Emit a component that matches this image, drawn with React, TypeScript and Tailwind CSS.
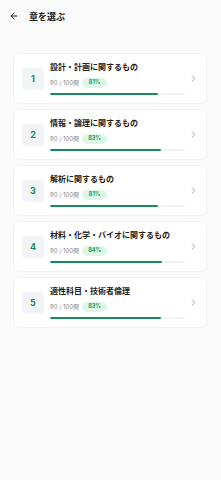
import { ArrowLeft, ChevronRight } from "lucide-react";

type Chapter = { no: number; title: string; done: number; total: number; rate: number };

const CHAPTERS: Chapter[] = [
  { no: 1, title: "設計・計画に関するもの",         done: 80, total: 100, rate: 81 },
  { no: 2, title: "情報・論理に関するもの",         done: 80, total: 100, rate: 83 },
  { no: 3, title: "解析に関するもの",               done: 80, total: 100, rate: 81 },
  { no: 4, title: "材料・化学・バイオに関するもの", done: 80, total: 100, rate: 84 },
  { no: 5, title: "適性科目・技術者倫理",           done: 80, total: 100, rate: 83 },
];

const FONT = { fontFamily: '"Inter", "Noto Sans CJK JP", sans-serif' };

export default function App() {
  return (
    <div className="min-h-screen bg-[#fafafa]" style={FONT}>
      {/* Header */}
      <div className="flex items-center h-[32px] pl-[9px] gap-[10px]">
        <ArrowLeft className="w-[10px] h-[10px] text-[#222]" strokeWidth={2.4} />
        <h1 className="text-[9px] font-bold text-[#222] leading-none">章を選ぶ</h1>
      </div>

      {/* Chapter list */}
      <div className="flex flex-col gap-[5px] pl-[13px] pr-[14px] pt-[21px]">
        {CHAPTERS.map((c) => (
          <div
            key={c.no}
            className="flex items-center h-[51px] bg-white border border-[#f0f0f0] rounded-[7px] pl-[8px] pr-[7px]"
          >
            <div className="flex items-center justify-center w-[22px] h-[22px] rounded-[4px] bg-[#f1f4f7] shrink-0">
              <span className="text-[9px] font-bold text-[#1b8a5e] leading-none">{c.no}</span>
            </div>
            <div className="flex flex-col ml-[6px] w-[135px] shrink-0">
              <p className="text-[8px] font-bold text-[#222] leading-[11px]">{c.title}</p>
              <div className="flex items-center gap-[3px] mt-[5px]">
                <span className="text-[6px] text-[#888] leading-none">
                  {c.done} / {c.total}問
                </span>
                <span className="flex items-center justify-center w-[25px] h-[10px] rounded-full bg-[#dcf7e7] text-[5.5px] font-bold text-[#1e9a60] leading-none">
                  {c.rate}%
                </span>
              </div>
              <div className="h-[2.5px] mt-[5px] rounded-full bg-[#f1f4f7] overflow-hidden">
                <div className="h-full bg-[#178a5c] rounded-full" style={{ width: `${c.rate - 1}%` }} />
              </div>
            </div>
            <div className="flex-1" />
            <ChevronRight className="w-[11px] h-[11px] text-[#9aa0a6]" strokeWidth={2} />
          </div>
        ))}
      </div>
    </div>
  );
}
